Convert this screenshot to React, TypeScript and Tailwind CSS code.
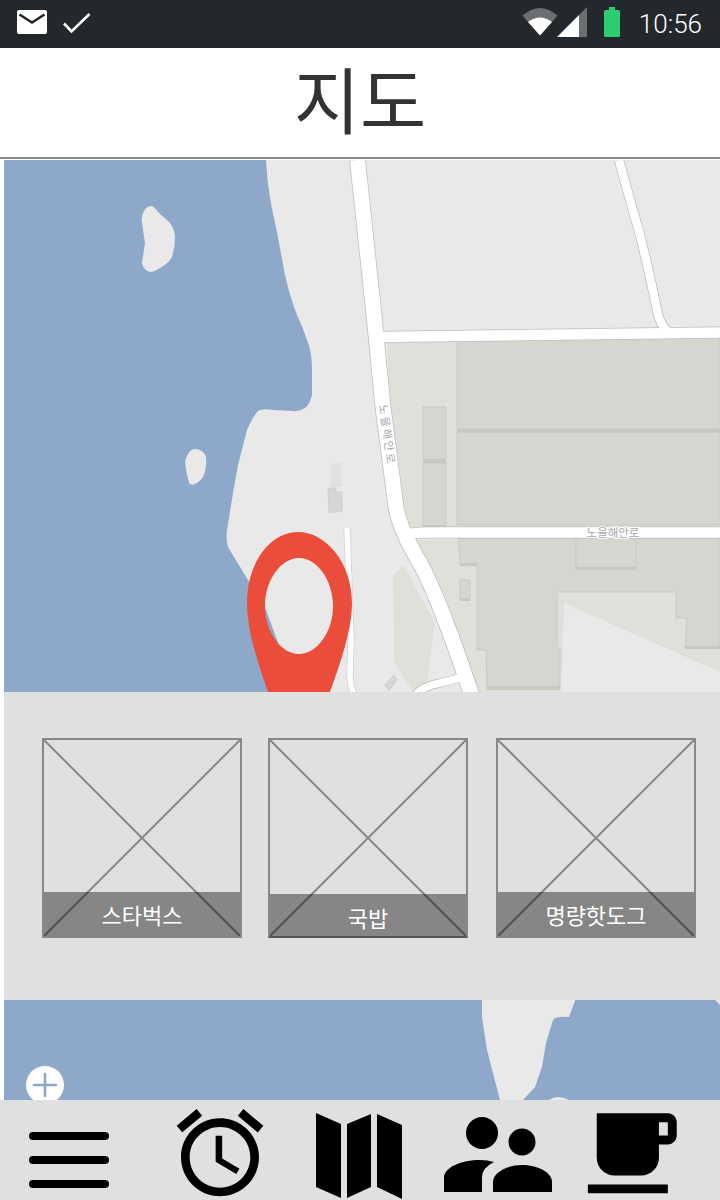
import React from "react";

function StatusBar() {
  return (
    <div className="h-12 bg-[#22282c] flex items-center shrink-0">
      <svg width="720" height="48" viewBox="0 0 720 48" className="absolute left-0 top-0">
        <path d="M19 10h26a2 2 0 0 1 2 2v20a2 2 0 0 1-2 2H19a2 2 0 0 1-2-2V12a2 2 0 0 1 2-2z" fill="#fff" />
        <path d="M19.5 14.5L32 22.5L44.5 14.5" fill="none" stroke="#22282c" strokeWidth="2.6" />
        <path d="M64 23.5L71.5 31.5L89.5 14" fill="none" stroke="#fff" strokeWidth="2.6" />
        <path d="M522.5 15.5Q540 0.5 557.5 15.5L540 35.5z" fill="#6b6f72" />
        <path d="M528 22Q540 13 552 22L540 35.5z" fill="#fff" />
        <path d="M557 37L579 15V37z" fill="#fff" />
        <path d="M579 15L587 7V37H579z" fill="#6b6f72" />
        <rect x="609" y="7" width="6" height="4" fill="#2ecc71" />
        <rect x="604" y="10" width="16" height="27" rx="1.5" fill="#2ecc71" />
      </svg>
      <span className="ml-auto mr-[18px] relative text-[26px] leading-none text-white font-['Roboto',sans-serif] font-light">
        10:56
      </span>
    </div>
  );
}

function MapDrawing() {
  return (
    <svg width="716" height="940" viewBox="4 160 716 940" className="block">
      <rect x="4" y="160" width="716" height="940" fill="#e9e9e9" />
      <path
        d="M4 160H266Q267 180 270 198Q273 215 277 232L285 275Q290 297 297 315Q303 328 307 340Q312 352 312 368L312 395Q310 404 305 408Q299 412 293 411L273 410Q262 408 258 411Q252 418 247 430L238 465L233 493L227 530Q226 541 228 547L248 580L266 610L277 640L300 700H4z"
        fill="#8ea8c9"
      />
      <path
        d="M151 206Q146 206 143 213Q141 218 142 223L145 243L142 263Q144 271 150 272Q154 272 160 268Q168 264 172 257Q175 248 175 238Q175 230 170 223L158 212Q154 206 151 206z"
        fill="#e9e9e9"
      />
      <path
        d="M195 449Q188 449 185 462Q186 472 189 483Q191 486 195 484Q203 480 205 472Q207 464 206 457Q203 449 195 449z"
        fill="#e9e9e9"
      />
      <path
        d="M4 990H482V1017L487 1050L500 1100H523L535 1087L542 1067L546 1043L553 1020Q556 1016 569 1017L579 990H706L720 1005V1100H4z"
        fill="#8ea8c9"
      />
      <path d="M549 1100Q558 1094 569 1100z" fill="#e9e9e9" />

      <path d="M387 342L720 338V527H408L402 507L390 407z" fill="#dee1da" />
      <path d="M412 540H720V700H480L447 600z" fill="#dee1da" />
      <path d="M393 577L403 565L435 622L427 682L413 692L394 662z" fill="#dee1da" />

      <g fill="#d4d7d0" stroke="#c4c7c0" strokeWidth="0.8">
        <rect x="457" y="336" width="263" height="93" />
        <rect x="457" y="432" width="263" height="93" />
        <rect x="423" y="407" width="23" height="52" />
        <rect x="423" y="463" width="23" height="64" />
        <path d="M458 538L460 565H477V650H486L487 688L560 687V648H557V592H676V618H687L685 648H720V538z" />
        <rect x="576" y="538" width="60" height="30" />
        <rect x="460" y="580" width="10" height="20" />
      </g>
      <g fill="#c6c9c2">
        <rect x="457" y="429" width="263" height="3.5" />
        <rect x="423" y="459" width="23" height="4" />
        <rect x="576" y="567" width="60" height="3" />
        <rect x="460" y="598" width="10" height="3" />
        <rect x="460" y="563" width="17" height="3" />
        <rect x="487" y="686" width="73" height="4" />
        <rect x="685" y="646" width="35" height="3" />
        <rect x="423" y="525" width="23" height="2" />
      </g>
      <path d="M564 603L720 672V700H561z" fill="#e9e9e9" />

      <g fill="none" strokeLinejoin="round">
        <path d="M619 160Q630 200 640 235Q650 275 657 310Q660 325 668 332" stroke="#bdbdbd" strokeWidth="10" />
        <path d="M378 337L720 332.5" stroke="#bdbdbd" strokeWidth="12" />
        <path d="M404 538Q408 532.5 425 532.5H720" stroke="#bdbdbd" strokeWidth="12" />
        <path d="M357.5 160L374.5 320L383 407L396 507Q400 530 420 563Q440 600 472 696" stroke="#bdbdbd" strokeWidth="16.5" />
        <path d="M415 696Q422 686 440 683L460 678" stroke="#bdbdbd" strokeWidth="9" />
        <path d="M347 528L351 640L350 675Q350 690 356 696" stroke="#cfcfcf" strokeWidth="7" />
        <path d="M619 160Q630 200 640 235Q650 275 657 310Q660 325 668 332" stroke="#fff" strokeWidth="8.5" />
        <path d="M378 337L720 332.5" stroke="#fff" strokeWidth="10.5" />
        <path d="M404 538Q408 532.5 425 532.5H720" stroke="#fff" strokeWidth="10.5" />
        <path d="M357.5 160L374.5 320L383 407L396 507Q400 530 420 563Q440 600 472 696" stroke="#fff" strokeWidth="15" />
        <path d="M415 696Q422 686 440 683L460 678" stroke="#fff" strokeWidth="7.5" />
        <path d="M347 528L351 640L350 675Q350 690 356 696" stroke="#fff" strokeWidth="5.5" />
      </g>

      <path d="M330 465L342 462V487H330z" fill="#e1e1e1" />
      <path d="M328 488H336V492H342V511L329 513z" fill="#d6d6d6" stroke="#c8c8c8" strokeWidth="0.6" />
      <path d="M385 685L394 675L397 680L389 691z" fill="#d6d6d6" stroke="#c4c4c4" strokeWidth="0.6" />

      <text
        x="613"
        y="537"
        textAnchor="middle"
        fontSize="11.5"
        fill="#a6a6a6"
        stroke="#fff"
        strokeWidth="2"
        paintOrder="stroke"
        fontFamily="'Noto Sans CJK KR',sans-serif"
      >
        노을해안로
      </text>
      <text
        transform="translate(379 405) rotate(82)"
        x="0"
        y="0"
        fontSize="11"
        letterSpacing="2.2"
        fill="#a6a6a6"
        stroke="#fff"
        strokeWidth="2"
        paintOrder="stroke"
        fontFamily="'Noto Sans CJK KR',sans-serif"
      >
        노을해안로
      </text>

      <path
        fillRule="evenodd"
        d="M298 532C270 532 247 563 247 603C247 630 258 665 271 700H327C340 665 352 630 352 603C352 563 326 532 298 532zM299 558C317 558 333 580 333 606C333 632 317 654 299 654C281 654 265 632 265 606C265 580 281 558 299 558z"
        fill="#ea4e3b"
      />

      <circle cx="45" cy="1085" r="19" fill="#fff" />
      <path d="M34 1085H56M45 1074V1096" stroke="#8ea8c9" strokeWidth="2.6" strokeLinecap="round" />
    </svg>
  );
}

function Card({
  label,
  bottomDark,
  captionClass,
}: {
  label: string;
  bottomDark?: boolean;
  captionClass: string;
}) {
  return (
    <div
      className={
        bottomDark
          ? "relative w-[200px] h-[200px] border-2 border-[#888888] border-b-[#555555]"
          : "relative w-[200px] h-[200px] border-2 border-[#888888]"
      }
    >
      <svg
        viewBox="0 0 196 196"
        preserveAspectRatio="none"
        className="absolute inset-0 w-full h-full"
      >
        <path d="M0 0L196 196M196 0L0 196" stroke="#888888" strokeWidth="2" />
      </svg>
      <div className={captionClass}>{label}</div>
    </div>
  );
}

function PlacesPanel() {
  const caption =
    "absolute left-0 right-0 bottom-0 bg-black/40 flex items-center justify-center text-white text-[22px] leading-none";
  return (
    <div className="absolute left-1 right-0 top-[532px] h-[308px] bg-[#e0e0e0] flex items-start pl-[38px] pt-[46px]">
      <Card label="스타벅스" captionClass={`${caption} h-[44px]`} />
      <div className="ml-[26px]">
        <Card label="국밥" bottomDark captionClass={`${caption} h-[42px] pt-1`} />
      </div>
      <div className="ml-[28px]">
        <Card label="명량핫도그" captionClass={`${caption} h-[44px]`} />
      </div>
    </div>
  );
}

function BottomNav() {
  return (
    <div className="h-[100px] bg-[#e0e0e0] flex items-start shrink-0 overflow-hidden">
      <div className="ml-[29px] mt-[32px] w-[80px] flex flex-col gap-4">
        <div className="h-2 rounded bg-black" />
        <div className="h-2 rounded bg-black" />
        <div className="h-2 rounded bg-black" />
      </div>
      <svg width="104" height="104" viewBox="0 0 24 24" className="ml-[59px] mt-[1px] shrink-0">
        <path d="M22 5.72l-4.6-3.86-1.29 1.53 4.6 3.86L22 5.72zM7.88 3.39L6.6 1.86 2 5.71l1.29 1.53 4.59-3.85zM12.5 8H11v6l4.75 2.85.75-1.23-4-2.37V8zM12 4c-4.97 0-9 4.03-9 9s4.03 9 9 9 9-4.03 9-9-4.03-9-9-9zm0 16c-3.87 0-7-3.13-7-7s3.13-7 7-7 7 3.13 7 7-3.13 7-7 7z" />
      </svg>
      <svg width="86" height="100" viewBox="316 1100 86 100" className="ml-[44px] shrink-0">
        <path d="M316 1113L341 1124V1198L316 1187zM347 1124L371 1114V1187L347 1198zM377 1114L402 1125V1199L377 1187z" />
      </svg>
      <svg width="108" height="100" viewBox="444 1100 108 100" className="ml-[42px] shrink-0">
        <circle cx="482" cy="1133" r="16" />
        <circle cx="522" cy="1142" r="13.5" />
        <path d="M444 1192V1178C444 1167 462 1160 480 1160Q488 1160 494 1162Q482 1168 482 1177V1192z" />
        <path d="M493 1192V1182C493 1172 508 1165 522 1165C537 1165 552 1172 552 1182V1192z" />
      </svg>
      <svg width="106.6" height="106.6" viewBox="0 0 24 24" className="ml-[27px] shrink-0">
        <path d="M20 3H4v10c0 2.21 1.79 4 4 4h6c2.21 0 4-1.79 4-4v-3h2c1.11 0 2-.9 2-2V5c0-1.11-.89-2-2-2zm0 5h-2V5h2v3zM2 21h18v-2H2v2z" />
      </svg>
    </div>
  );
}

export default function App() {
  return (
    <div className="relative w-[720px] h-[1200px] bg-white flex flex-col overflow-hidden font-['Noto_Sans_CJK_KR','Noto_Sans',sans-serif]">
      <StatusBar />
      <div className="h-[111px] shrink-0 border-b-2 border-[#888888] flex items-center justify-center pb-3 text-[72px] leading-none text-[#333333]">
        지도
      </div>
      <div className="relative mt-px h-[940px] pl-1 overflow-hidden">
        <MapDrawing />
        <PlacesPanel />
      </div>
      <BottomNav />
    </div>
  );
}
